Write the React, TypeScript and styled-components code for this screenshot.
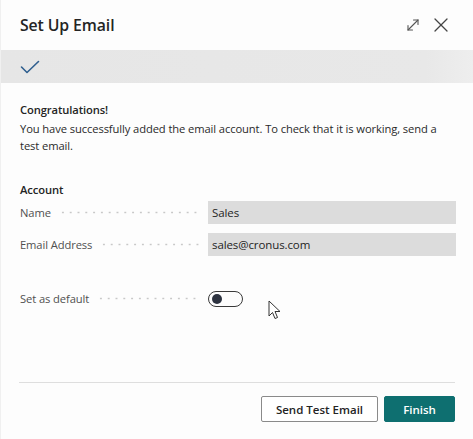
import React from "react";
import styled, { createGlobalStyle } from "styled-components";

const Global = createGlobalStyle`
  html, body { margin: 0; padding: 0; background: #ffffff; }
  body { font-family: "Open Sans", "Noto Sans", Arial, sans-serif; color: #242424; }
`;

const Dialog = styled.div`
  position: relative;
  width: 473px;
  height: 439px;
  display: flex;
  flex-direction: column;
  background: #fdfdfd;
  box-sizing: border-box;
  border-left: 1px solid #f0f0f0;
`;

const Header = styled.div`
  height: 50px;
  display: flex;
  align-items: center;
  justify-content: space-between;
  padding: 0 24px 0 19px;
`;

const Title = styled.h1`
  margin: 0;
  font-size: 15.8px;
  font-weight: 600;
  color: #242424;
  letter-spacing: -0.1px;
`;

const HeaderActions = styled.div`
  display: flex;
  align-items: center;
  gap: 12px;
`;

const IconButton = styled.button`
  border: 0;
  background: transparent;
  padding: 0;
  width: 16px;
  height: 16px;
  display: flex;
  align-items: center;
  justify-content: center;
  color: #444;
`;

const StepBar = styled.div`
  height: 33px;
  background: linear-gradient(90deg, #e6e6e6 0%, #e8e8e8 90%, #eeeeee 100%);
  display: flex;
  align-items: center;
  padding-left: 19px;
`;

const Content = styled.div`
  padding: 0 16px 0 19px;
  display: flex;
  flex-direction: column;
  flex: 1;
  font-size: 11.2px;
  letter-spacing: -0.1px;
`;

const Heading = styled.div`
  margin-top: 19px;
  font-weight: 600;
  line-height: 16px;
`;

const Para = styled.p`
  margin: 2px 0 0;
  line-height: 17px;
  color: #2a2a2a;
`;

const SectionTitle = styled.div`
  margin-top: 28px;
  font-weight: 600;
  line-height: 16px;
`;

const Row = styled.div<{ $mt: number }>`
  display: grid;
  grid-template-columns: 188px 248px;
  align-items: center;
  margin-top: ${(p) => p.$mt}px;
  height: 23px;
`;

const LabelCell = styled.div`
  display: flex;
  align-items: center;
  padding-right: 7px;
  color: #505050;
  white-space: nowrap;
`;

const Leader = styled.span`
  flex: 1;
  height: 3px;
  margin-left: 8px;
  background-image: radial-gradient(circle, #c8c8c8 0.8px, transparent 1.2px);
  background-size: 7.8px 3px;
  background-repeat: repeat-x;
`;

const Field = styled.div`
  height: 23px;
  background: #dcdcdc;
  display: flex;
  align-items: center;
  padding-left: 4px;
  color: #242424;
  font-size: 11.5px;
`;

const Toggle = styled.div`
  width: 35px;
  height: 16px;
  box-sizing: border-box;
  border: 1.3px solid #3a3a3a;
  border-radius: 9px;
  display: flex;
  align-items: center;
  padding-left: 3px;
`;

const Knob = styled.span`
  width: 10px;
  height: 10px;
  border-radius: 50%;
  background: #2d3340;
`;

const Footer = styled.div`
  margin: auto 18px 0 18px;
  border-top: 1.5px solid #dedede;
  height: 57px;
  display: flex;
  align-items: flex-start;
  justify-content: flex-end;
  gap: 6px;
  padding-top: 13px;
  box-sizing: border-box;
`;

const Button = styled.button<{ $primary?: boolean }>`
  height: 26px;
  padding: 0 10px;
  font-family: inherit;
  font-size: 11.5px;
  font-weight: 600;
  border-radius: 2px;
  border: 1px solid ${(p) => (p.$primary ? "#0e6f70" : "#8a8a8a")};
  background: ${(p) => (p.$primary ? "#0e6f70" : "#ffffff")};
  color: ${(p) => (p.$primary ? "#ffffff" : "#242424")};
  width: ${(p) => (p.$primary ? "71px" : "117px")};
`;

const Cursor = styled.svg`
  position: absolute;
  left: 267px;
  top: 300px;
`;

export default function App() {
  return (
    <>
      <Global />
      <Dialog>
        <Header>
          <Title>Set Up Email</Title>
          <HeaderActions>
            <IconButton aria-label="Expand">
              <svg width="14" height="14" viewBox="0 0 14 14" fill="none" stroke="#555" strokeWidth="1.1" strokeLinecap="round">
                <path d="M2 12 L12 2" />
                <path d="M7.5 2 H12 V6.5" />
                <path d="M2 7.5 V12 H6.5" />
              </svg>
            </IconButton>
            <IconButton aria-label="Close">
              <svg width="14" height="14" viewBox="0 0 14 14" fill="none" stroke="#444" strokeWidth="1.3" strokeLinecap="round">
                <path d="M1 1 L13 13" />
                <path d="M13 1 L1 13" />
              </svg>
            </IconButton>
          </HeaderActions>
        </Header>
        <StepBar>
          <svg width="20" height="14" viewBox="0 0 20 14" fill="none" stroke="#2f5f8f" strokeWidth="1.6" strokeLinecap="round" strokeLinejoin="round">
            <path d="M1.5 7 L7 12.5 L18.5 1.5" />
          </svg>
        </StepBar>
        <Content>
          <Heading>Congratulations!</Heading>
          <Para>
            You have successfully added the email account. To check that it is working, send a test email.
          </Para>
          <SectionTitle>Account</SectionTitle>
          <Row $mt={3}>
            <LabelCell>
              Name
              <Leader />
            </LabelCell>
            <Field>Sales</Field>
          </Row>
          <Row $mt={9}>
            <LabelCell>
              Email Address
              <Leader />
            </LabelCell>
            <Field>sales@cronus.com</Field>
          </Row>
          <Row $mt={31}>
            <LabelCell>
              Set as default
              <Leader />
            </LabelCell>
            <Toggle>
              <Knob />
            </Toggle>
          </Row>
        </Content>
        <Footer>
          <Button>Send Test Email</Button>
          <Button $primary>Finish</Button>
        </Footer>
        <Cursor width="14" height="21" viewBox="0 0 14 21">
          <path d="M1 1 L1 16 L4.5 12.5 L7 18.5 L9.5 17.5 L7 11.5 L12 11.5 Z" fill="#fff" stroke="#333" strokeWidth="1" strokeLinejoin="round" />
        </Cursor>
      </Dialog>
    </>
  );
}
